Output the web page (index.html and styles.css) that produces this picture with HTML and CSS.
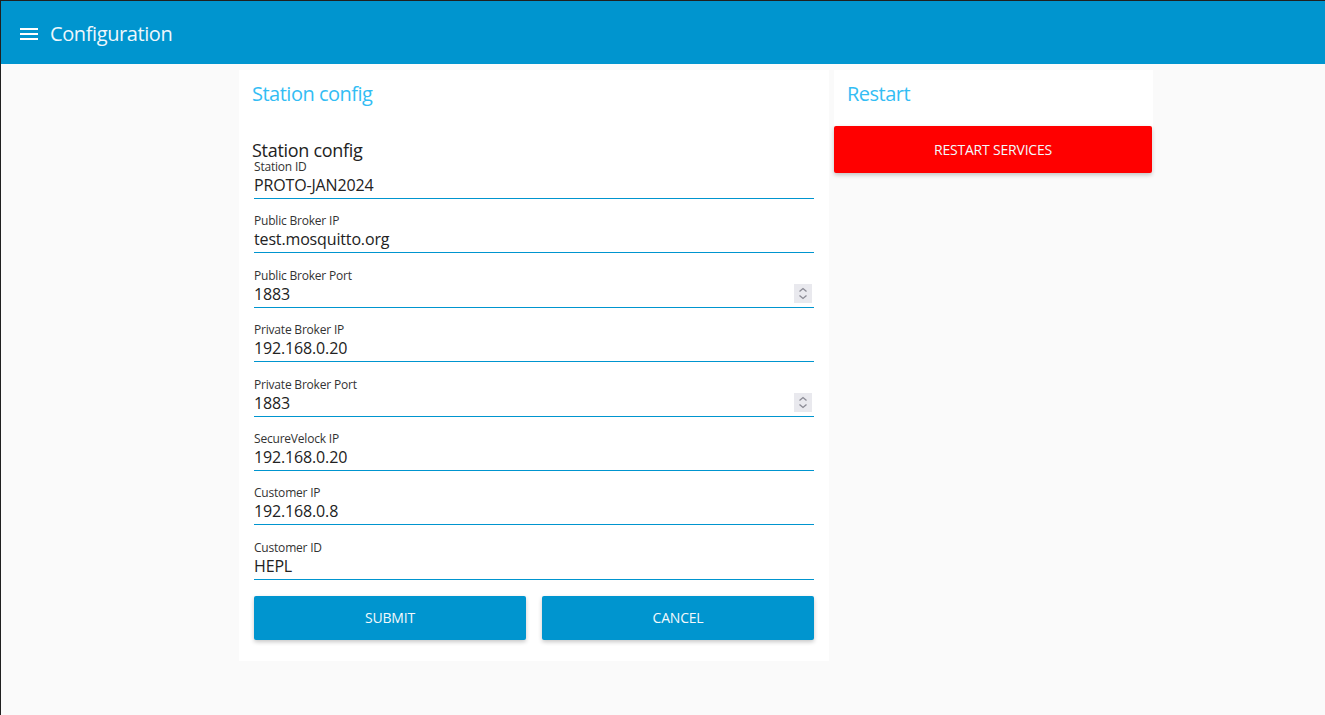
FILE: index.html
```html
<!DOCTYPE html>
<html lang="en">
<head>
<meta charset="utf-8">
<title>Configuration</title>
<link rel="stylesheet" href="styles.css">
</head>
<body>
<div class="frame">
  <header class="topbar">
    <button class="menu-btn" aria-label="menu">
      <svg width="18" height="12" viewBox="0 0 18 12"><rect x="0" y="0" width="18" height="2" fill="#fff"/><rect x="0" y="5" width="18" height="2" fill="#fff"/><rect x="0" y="10" width="18" height="2" fill="#fff"/></svg>
    </button>
    <h1 class="app-title">Configuration</h1>
  </header>
  <main class="content">
    <section class="card card-config">
      <h2 class="card-title">Station config</h2>
      <form class="config-form">
        <h3 class="form-heading">Station config</h3>
        <div class="field"><label class="field-label">Station ID</label><div class="field-input"><span class="value">PROTO-JAN2024</span></div></div>
        <div class="field"><label class="field-label">Public Broker IP</label><div class="field-input"><span class="value">test.mosquitto.org</span></div></div>
        <div class="field"><label class="field-label">Public Broker Port</label><div class="field-input"><span class="value">1883</span><span class="spinner"><svg width="18" height="19" viewBox="0 0 18 19"><rect width="18" height="19" fill="#e9e9ee"/><path d="M5.5 7.5 L9 4.5 L12.5 7.5" fill="none" stroke="#8a8a94" stroke-width="1.3"/><path d="M5.5 11.5 L9 14.5 L12.5 11.5" fill="none" stroke="#8a8a94" stroke-width="1.3"/></svg></span></div></div>
        <div class="field"><label class="field-label">Private Broker IP</label><div class="field-input"><span class="value">192.168.0.20</span></div></div>
        <div class="field"><label class="field-label">Private Broker Port</label><div class="field-input"><span class="value">1883</span><span class="spinner"><svg width="18" height="19" viewBox="0 0 18 19"><rect width="18" height="19" fill="#e9e9ee"/><path d="M5.5 7.5 L9 4.5 L12.5 7.5" fill="none" stroke="#8a8a94" stroke-width="1.3"/><path d="M5.5 11.5 L9 14.5 L12.5 11.5" fill="none" stroke="#8a8a94" stroke-width="1.3"/></svg></span></div></div>
        <div class="field"><label class="field-label">SecureVelock IP</label><div class="field-input"><span class="value">192.168.0.20</span></div></div>
        <div class="field"><label class="field-label">Customer IP</label><div class="field-input"><span class="value">192.168.0.8</span></div></div>
        <div class="field"><label class="field-label">Customer ID</label><div class="field-input"><span class="value">HEPL</span></div></div>
        <div class="actions">
          <button type="button" class="btn btn-primary">SUBMIT</button>
          <button type="button" class="btn btn-primary">CANCEL</button>
        </div>
      </form>
    </section>
    <section class="card card-restart">
      <h2 class="card-title">Restart</h2>
      <button type="button" class="btn btn-danger">RESTART SERVICES</button>
    </section>
  </main>
</div>
</body>
</html>
```
FILE: styles.css
```css
* { box-sizing: border-box; }
html, body { margin: 0; padding: 0; }
body {
  font-family: "Open Sans", "Noto Sans", sans-serif;
  background: #fafafa;
  color: #222;
}
.frame {
  width: 1325px;
  height: 715px;
  border-left: 1px solid #202020;
  border-top: 1px solid #202020;
  background: #fafafa;
  overflow: hidden;
}
.topbar {
  height: 63px;
  background: #0095cf;
  display: flex;
  align-items: center;
  padding-left: 19px;
  padding-top: 2px;
}
.menu-btn {
  background: none;
  border: 0;
  padding: 0;
  width: 18px;
  height: 12px;
  display: flex;
  margin-right: 12px;
}
.app-title {
  margin: 0;
  font-size: 20px;
  font-weight: 400;
  letter-spacing: -0.4px;
  color: #eef7fc;
  line-height: 24px;
}
.content {
  display: flex;
  align-items: flex-start;
  gap: 5px;
  padding: 6px 0 0 238px;
}
.card {
  background: #fff;
}
.card-config {
  width: 590px;
  padding: 0 15px 21px;
}
.card-restart {
  width: 319px;
}
.card-title {
  margin: 0;
  height: 56px;
  padding: 12px 0 0 13px;
  font-size: 20px;
  line-height: 24px;
  font-weight: 400;
  letter-spacing: -0.5px;
  color: #33bdf4;
}
.card-config .card-title { padding-left: 13px; margin-left: -15px; }
.form-heading {
  margin: 15px 0 1px -2px;
  font-size: 18px;
  line-height: 18px;
  font-weight: 400;
  letter-spacing: -0.3px;
  color: #222;
}
.field {
  margin-bottom: 15.4px;
}
.field-label {
  display: block;
  font-size: 12px;
  line-height: 14px;
  letter-spacing: -0.2px;
  color: #333;
}
.field-input {
  height: 25px;
  border-bottom: 1px solid #0095cf;
  display: flex;
  align-items: center;
  justify-content: space-between;
  padding-bottom: 2px;
}
.value {
  font-size: 16px;
  line-height: 22px;
  letter-spacing: -0.15px;
  color: #222;
}
.spinner {
  display: flex;
  margin-right: 2px;
}
.actions {
  display: grid;
  grid-template-columns: 1fr 1fr;
  gap: 16px;
  margin-top: 16px;
}
.btn {
  font-family: inherit;
  border: 0;
  border-radius: 2px;
  font-size: 14px;
  letter-spacing: -0.2px;
  color: #f3f9fc;
  cursor: pointer;
  box-shadow: 0 2px 4px rgba(0,0,0,0.22);
}
.btn-primary {
  height: 44px;
  background: #0095cf;
}
.btn-danger {
  display: block;
  width: 318px;
  height: 47px;
  background: #ff0000;
}
```
